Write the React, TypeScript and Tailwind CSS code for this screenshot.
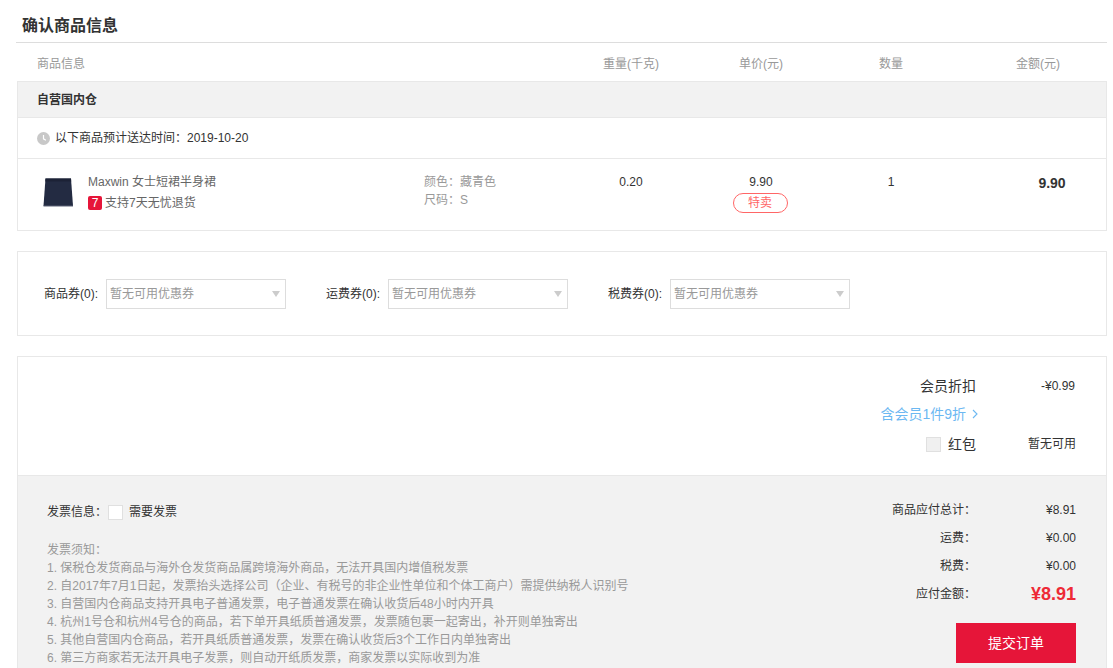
const font = '[font-family:"Liberation_Sans","Noto_Sans_CJK_SC",sans-serif]';

function Coupon({ label }: { label: string }) {
  return (
    <div className="flex w-[282px] shrink-0 items-center">
      <span className="w-[54px] whitespace-nowrap text-[12px] text-[#333]">{label}</span>
      <div className="ml-2 flex h-[30px] w-[180px] items-center justify-between border border-[#ddd] pl-[3px] pr-[5px] text-[12px] text-[#999]">
        <span>暂无可用优惠券</span>
        <span className="h-0 w-0 border-x-[4px] border-t-[6px] border-x-transparent border-t-[#ccc]" />
      </div>
    </div>
  );
}

function Total({ label, value, big }: { label: string; value: string; big?: boolean }) {
  return (
    <div className="flex h-7 items-center justify-end">
      <span className="whitespace-nowrap text-[12px] text-[#333]">{label}</span>
      <span className={big ? "w-[100px] text-right text-[18px] font-bold text-[#ee2a36]" : "w-[100px] text-right text-[12px] text-[#333]"}>
        {value}
      </span>
    </div>
  );
}

const notes = [
  "发票须知：",
  "1. 保税仓发货商品与海外仓发货商品属跨境海外商品，无法开具国内增值税发票",
  "2. 自2017年7月1日起，发票抬头选择公司（企业、有税号的非企业性单位和个体工商户）需提供纳税人识别号",
  "3. 自营国内仓商品支持开具电子普通发票，电子普通发票在确认收货后48小时内开具",
  "4. 杭州1号仓和杭州4号仓的商品，若下单开具纸质普通发票，发票随包裹一起寄出，补开则单独寄出",
  "5. 其他自营国内仓商品，若开具纸质普通发票，发票在确认收货后3个工作日内单独寄出",
  "6. 第三方商家若无法开具电子发票，则自动开纸质发票，商家发票以实际收到为准",
];

export default function App() {
  return (
    <div className={`h-[668px] w-[1113px] overflow-hidden bg-white ${font}`}>
      <div className="ml-[16px] w-[1091px]">
        {/* title */}
        <div className="flex h-[43px] items-end border-b border-[#ddd] pb-[4px] pl-[6px]">
          <h1 className="text-[16px] font-bold leading-[24px] text-[#333]">确认商品信息</h1>
        </div>

        <div className="ml-px">
          {/* table head */}
          <div className="flex h-[38px] items-center pt-[4px] text-[12px] text-[#999]">
            <div className="w-[554px] shrink-0 pl-5">商品信息</div>
            <div className="w-[120px] shrink-0 text-center">重量(千克)</div>
            <div className="w-[140px] shrink-0 text-center">单价(元)</div>
            <div className="w-[120px] shrink-0 text-center">数量</div>
            <div className="w-[156px] shrink-0 pl-[18px] text-center">金额(元)</div>
          </div>

          {/* table */}
          <div className="border border-[#e8e8e8]">
            <div className="flex h-[36px] items-center border-b border-[#e8e8e8] bg-[#f2f2f2] pl-[19px] text-[12px] font-bold text-[#333]">
              自营国内仓
            </div>
            <div className="flex h-[41px] items-center border-b border-[#e8e8e8] pl-[19px] text-[12px] text-[#333]">
              <svg width="13" height="13" viewBox="0 0 13 13" className="mr-[5px]">
                <circle cx="6.5" cy="6.5" r="6.5" fill="#c8c8c8" />
                <path d="M6.5 3v3.8l2.4 1.4" fill="none" stroke="#fff" strokeWidth="1.2" />
              </svg>
              <span>以下商品预计送达时间：2019-10-20</span>
            </div>
            <div className="flex h-[71px] text-[12px]">
              <div className="flex w-[406px] shrink-0 pl-[20px] pt-[14px]">
                <svg width="40" height="40" viewBox="0 0 40 40" className="mr-[10px] mt-[2px] shrink-0">
                  <path d="M7.5 3.5h25.5l2 27.5H5.5Z" fill="#232b42" />
                  <path d="M7.5 3.5h25.5l.2 3H7.3Z" fill="#1c2236" />
                  <path d="M5.5 30.5h29.5v1H5.5Z" fill="#5a6075" />
                </svg>
                <div>
                  <div className="leading-[18px] text-[#666]">Maxwin 女士短裙半身裙</div>
                  <div className="mt-[3px] flex items-center leading-[18px] text-[#666]">
                    <span className="mr-[3px] flex h-[14px] w-[14px] items-center justify-center rounded-[2px] bg-[#e61539] text-[12px] leading-none text-white">7</span>
                    支持7天无忧退货
                  </div>
                </div>
              </div>
              <div className="w-[147px] shrink-0 pt-[14px] leading-[18px] text-[#999]">
                <div>颜色：藏青色</div>
                <div>尺码：S</div>
              </div>
              <div className="w-[119px] shrink-0 pl-px pt-[14px] text-center leading-[18px] text-[#333]">0.20</div>
              <div className="flex w-[140px] shrink-0 flex-col items-center pt-[14px] leading-[18px] text-[#333]">
                <div className="pl-[2px]">9.90</div>
                <div className="mt-[2px] flex h-[20px] w-[55px] items-center justify-center rounded-[10px] border border-[#f66] text-[#f66]">特卖</div>
              </div>
              <div className="w-[122px] shrink-0 pt-[14px] text-center leading-[18px] text-[#333]">1</div>
              <div className="flex-1 pl-[46px] pt-[15px] text-center text-[14px] font-bold leading-[18px] text-[#333]">9.90</div>
            </div>
          </div>

          {/* coupons */}
          <div className="mt-5 flex h-[85px] items-center border border-[#e8e8e8] pl-[26px]">
            <Coupon label="商品券(0):" />
            <Coupon label="运费券(0):" />
            <Coupon label="税费券(0):" />
          </div>

          {/* summary */}
          <div className="mt-5 border border-[#e8e8e8] border-b-0">
            <div className="h-[118px] pr-[30px] pt-[15px]">
              <div className="flex h-7 items-center justify-end">
                <span className="text-[14px] text-[#333]">会员折扣</span>
                <span className="w-[100px] pr-px text-right text-[12px] text-[#333]">-¥0.99</span>
              </div>
              <div className="flex h-7 items-center justify-end pr-[97px] text-[14px] text-[#6cb8f2]">
                <span>含会员1件9折</span>
                <svg width="8" height="10" viewBox="0 0 8 10" className="ml-[5px]">
                  <path d="M2 1l4 4-4 4" fill="none" stroke="#6cb8f2" strokeWidth="1.1" />
                </svg>
              </div>
              <div className="mt-[2px] flex h-7 items-center justify-end">
                <span className="mr-[7px] h-[15px] w-[15px] border border-[#e0e0e0] bg-[#f0f0f0]" />
                <span className="text-[14px] text-[#333]">红包</span>
                <span className="w-[100px] text-right text-[12px] text-[#333]">暂无可用</span>
              </div>
            </div>
            <div className="flex h-[200px] justify-between border-t border-[#e8e8e8] bg-[#f2f2f2] pr-[30px]">
              <div className="pl-[29px] pt-[27px] text-[12px]">
                <div className="flex h-[18px] items-center text-[#333]">
                  <span>发票信息：</span>
                  <span className="ml-[1px] mr-[6px] h-[15px] w-[15px] border border-[#e0e0e0] bg-white" />
                  <span>需要发票</span>
                </div>
                <div className="mt-5 leading-[18px] text-[#999]">
                  {notes.map((n) => (
                    <div key={n} className="whitespace-nowrap">{n}</div>
                  ))}
                </div>
              </div>
              <div className="w-[240px] pt-[20px]">
                <Total label="商品应付总计：" value="¥8.91" />
                <Total label="运费：" value="¥0.00" />
                <Total label="税费：" value="¥0.00" />
                <Total label="应付金额：" value="¥8.91" big />
                <div className="mt-[15px] flex justify-end">
                  <button className="h-10 w-[120px] bg-[#e61539] text-[14px] text-white">提交订单</button>
                </div>
              </div>
            </div>
          </div>
        </div>
      </div>
    </div>
  );
}
